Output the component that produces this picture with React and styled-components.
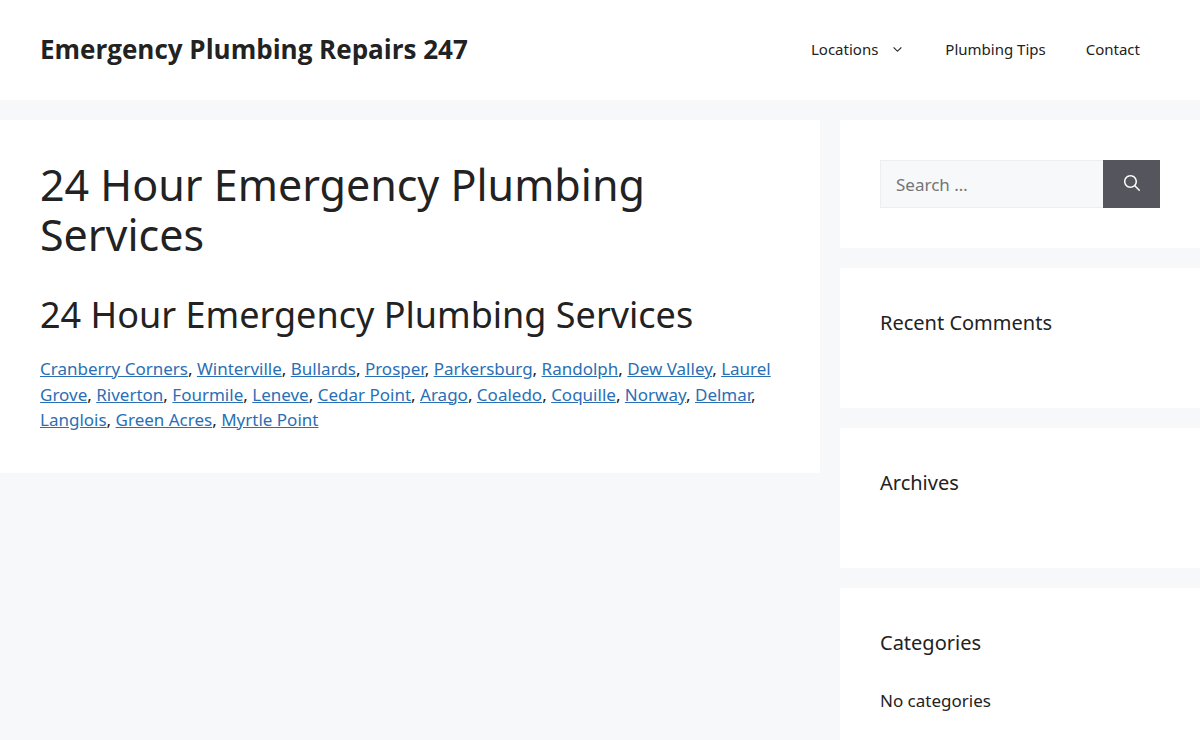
import React from "react";
import styled, { createGlobalStyle } from "styled-components";

const places = [
  "Cranberry Corners", "Winterville", "Bullards", "Prosper", "Parkersburg",
  "Randolph", "Dew Valley", "Laurel Grove", "Riverton", "Fourmile", "Leneve",
  "Cedar Point", "Arago", "Coaledo", "Coquille", "Norway", "Delmar",
  "Langlois", "Green Acres", "Myrtle Point",
];

const App = () => {
  return (
    <>
      <GlobalStyle />
      <Header>
        <SiteTitle href="#home">Emergency Plumbing Repairs 247</SiteTitle>
        <Nav aria-label="Primary">
          <NavLink href="#locations">
            Locations
            <Arrow viewBox="0 0 330 512" aria-hidden="true">
              <path d="M305.913 197.085c0 2.266-1.133 4.815-2.833 6.514L171.087 335.593c-1.7 1.7-4.249 2.832-6.515 2.832s-4.815-1.133-6.515-2.832L26.064 203.599c-1.7-1.7-2.832-4.248-2.832-6.514s1.132-4.816 2.832-6.515l14.162-14.163c1.7-1.699 3.966-2.832 6.515-2.832 2.266 0 4.815 1.133 6.515 2.832l111.316 111.317 111.316-111.317c1.7-1.699 4.249-2.832 6.515-2.832s4.815 1.133 6.515 2.832l14.162 14.163c1.7 1.7 2.833 4.249 2.833 6.515z" />
            </Arrow>
          </NavLink>
          <NavLink href="#tips">Plumbing Tips</NavLink>
          <NavLink href="#contact">Contact</NavLink>
        </Nav>
      </Header>
      <Page>
        <Article>
          <PageTitle>24 Hour Emergency Plumbing Services</PageTitle>
          <SubTitle>24 Hour Emergency Plumbing Services</SubTitle>
          <Places>
            {places.map((place, i) => (
              <React.Fragment key={place}>
                {i > 0 && ", "}
                <a href={"#" + place.toLowerCase().replace(" ", "-")}>{place}</a>
              </React.Fragment>
            ))}
          </Places>
        </Article>
        <Sidebar>
          <Widget>
            <SearchForm role="search" onSubmit={(e) => e.preventDefault()}>
              <SearchInput type="search" placeholder="Search …" aria-label="Search for:" />
              <SearchButton aria-label="Search">
                <SearchIcon viewBox="0 0 512 512" aria-hidden="true">
                  <path fillRule="evenodd" clipRule="evenodd" d="M208 48c-88.366 0-160 71.634-160 160s71.634 160 160 160 160-71.634 160-160S296.366 48 208 48zM0 208C0 93.125 93.125 0 208 0s208 93.125 208 208c0 48.741-16.765 93.566-44.843 129.024l133.826 134.018c9.366 9.379 9.355 24.575-.025 33.941-9.379 9.366-24.575 9.355-33.941-.025L337.238 370.987C301.747 399.167 256.839 416 208 416 93.125 416 0 322.875 0 208z" />
                </SearchIcon>
              </SearchButton>
            </SearchForm>
          </Widget>
          <Widget>
            <WidgetTitle>Recent Comments</WidgetTitle>
          </Widget>
          <Widget>
            <WidgetTitle>Archives</WidgetTitle>
          </Widget>
          <Widget>
            <WidgetTitle>Categories</WidgetTitle>
            <WidgetText>No categories</WidgetText>
          </Widget>
        </Sidebar>
      </Page>
    </>
  );
};

export default App;

const GlobalStyle = createGlobalStyle`
  * {
    box-sizing: border-box;
  }
  body {
    margin: 0;
    background: #f6f8fa;
    color: #222222;
    font-family: "Noto Sans", "Open Sans", sans-serif;
    font-size: 17px;
    line-height: 1.5;
  }
`;
const Header = styled.header`
  display: flex;
  justify-content: space-between;
  align-items: center;
  padding: 19px 40px 21px;
  background: #ffffff;
`;
const SiteTitle = styled.a`
  color: #222222;
  font-family: "Open Sans", "Noto Sans", sans-serif;
  font-size: 26px;
  font-weight: 700;
  line-height: 30px;
  text-decoration: none;
`;
const Nav = styled.nav`
  display: flex;
`;
const NavLink = styled.a`
  display: flex;
  align-items: center;
  padding: 0 20px;
  color: #222222;
  font-size: 15px;
  line-height: 60px;
  text-decoration: none;
`;
const Arrow = styled.svg`
  width: 15px;
  height: 15px;
  margin-left: 12px;
  fill: currentColor;
`;
const Page = styled.div`
  display: grid;
  grid-template-columns: minmax(0, 7fr) minmax(0, 3fr);
  align-items: start;
  padding: 20px 0;
`;
const Article = styled.main`
  margin-right: 20px;
  padding: 40px;
  background: #ffffff;
`;
const PageTitle = styled.h1`
  margin: 0;
  font-size: 43px;
  font-weight: 400;
  line-height: 50px;
`;
const SubTitle = styled.h2`
  margin: 34px 0 20px;
  font-size: 36px;
  font-weight: 400;
  line-height: 42px;
`;
const Places = styled.p`
  margin: 0;
  a {
    color: #2a6fb5;
  }
`;
const Sidebar = styled.aside`
  display: flex;
  flex-direction: column;
  gap: 20px;
`;
const Widget = styled.section`
  padding: 40px;
  background: #ffffff;
`;
const WidgetTitle = styled.h2`
  margin: 0 0 30px;
  font-size: 20px;
  font-weight: 400;
  line-height: 30px;
`;
const WidgetText = styled.p`
  margin: 0;
`;
const SearchForm = styled.form`
  display: flex;
`;
const SearchInput = styled.input`
  flex: 1;
  min-width: 0;
  height: 48px;
  padding: 0 15px;
  border: 1px solid #eceef0;
  border-right: 0;
  border-radius: 0;
  background: #f6f8fa;
  color: #222222;
  font: inherit;
  &::placeholder {
    color: #757575;
  }
`;
const SearchButton = styled.button`
  display: flex;
  align-items: center;
  justify-content: center;
  width: 57px;
  padding: 0 0 3px;
  border: 0;
  background: #55555e;
  color: #ffffff;
`;
const SearchIcon = styled.svg`
  width: 16px;
  height: 16px;
  fill: currentColor;
`;
